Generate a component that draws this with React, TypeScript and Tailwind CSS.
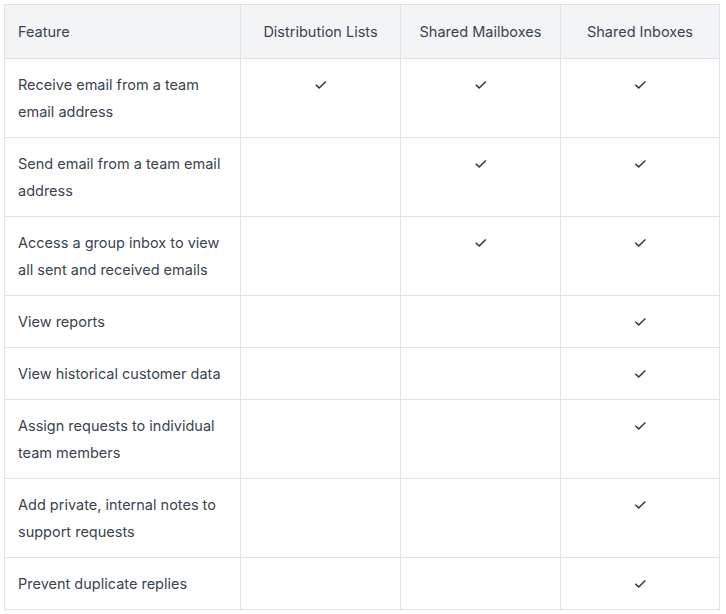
const cols = ["Feature", "Distribution Lists", "Shared Mailboxes", "Shared Inboxes"];

const rows: [string, boolean, boolean, boolean][] = [
  ["Receive email from a team email address", true, true, true],
  ["Send email from a team email address", false, true, true],
  ["Access a group inbox to view all sent and received emails", false, true, true],
  ["View reports", false, false, true],
  ["View historical customer data", false, false, true],
  ["Assign requests to individual team members", false, false, true],
  ["Add private, internal notes to support requests", false, false, true],
  ["Prevent duplicate replies", false, false, true],
];

export default function App() {
  return (
    <div className="bg-white w-[726px] h-[614px] pt-[4px] pl-[4px] font-[Inter] text-[#3a4450] text-[14.5px] leading-[27px]">
      <table className="border-collapse w-[715px] table-fixed">
        <colgroup>
          <col className="w-[236px]" />
          <col className="w-[160px]" />
          <col className="w-[160px]" />
          <col className="w-[159px]" />
        </colgroup>
        <thead>
          <tr className="bg-[#f3f4f6] h-[54px]">
            {cols.map((c, i) => (
              <th
                key={c}
                className={`border border-[#e0e2e6] font-normal px-[13px] ${i === 0 ? "text-left" : "text-center"}`}
              >
                {c}
              </th>
            ))}
          </tr>
        </thead>
        <tbody>
          {rows.map(([label, a, b, c]) => (
            <tr key={label}>
              <td className="border border-[#e0e2e6] px-[13px] pt-[12px] pb-[12px] align-top">{label}</td>
              {[a, b, c].map((v, i) => (
                <td key={i} className="border border-[#e0e2e6] text-center align-top pt-[12px] pb-[12px] text-[16px] text-[#2f3640]">
                  {v ? "✓" : ""}
                </td>
              ))}
            </tr>
          ))}
        </tbody>
      </table>
    </div>
  );
}
